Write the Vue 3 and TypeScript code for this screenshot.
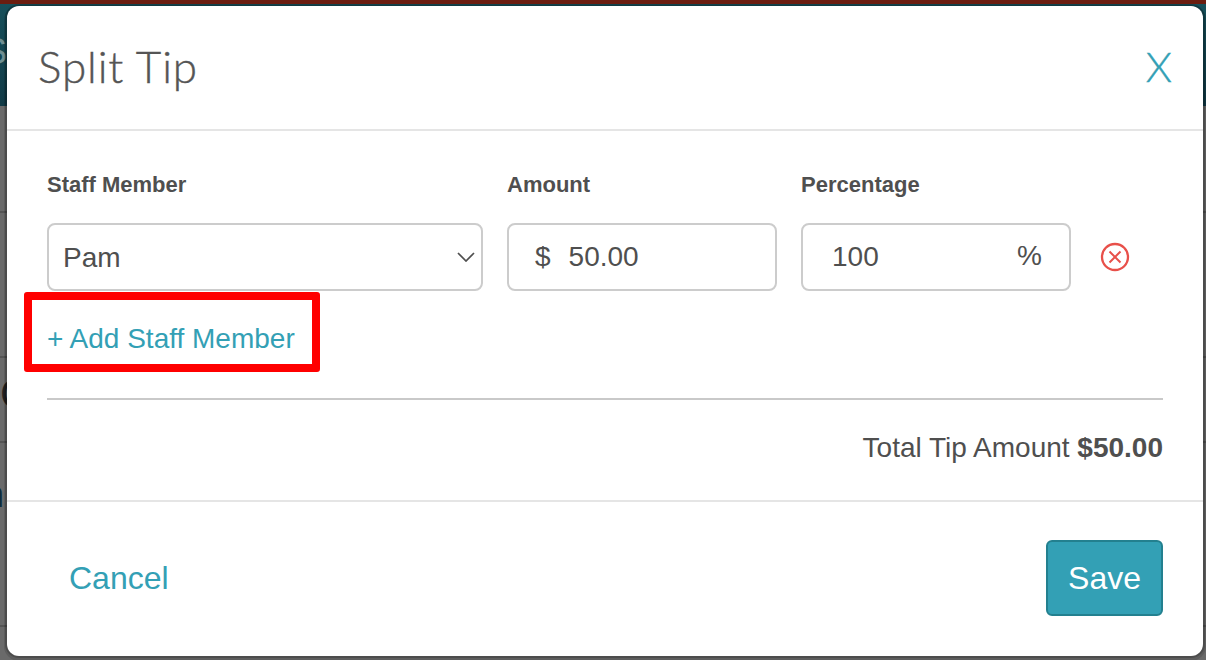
<script setup lang="ts">
import { ref } from 'vue'

const staff = ref('Pam')
const amount = ref('50.00')
const percentage = ref('100')

// table rows of the page behind the dialog, only their edges show
const rows = [
  { height: 107, text: '' },
  { height: 145, text: '' },
  { height: 85, text: 'C', cls: 'row-c' },
  { height: 184, text: 'n', cls: 'row-n' },
]
</script>

<template>
  <div class="page">
    <div class="backdrop">
      <div class="top-strip"></div>
      <div class="hero"><span class="hero-letter">S</span></div>
      <div class="content">
        <div
          v-for="(row, idx) in rows"
          :key="idx"
          class="bg-row"
          :style="{ height: row.height + 'px' }"
        >
          <span v-if="row.text" :class="row.cls">{{ row.text }}</span>
        </div>
      </div>
    </div>

    <div class="modal">
      <header class="modal-header">
        <h1 class="modal-title">Split Tip</h1>
        <span class="modal-close">X</span>
      </header>

      <section class="modal-body">
        <div class="split-row">
          <div class="field field-staff">
            <label class="field-label">Staff Member</label>
            <div class="control">
              <select v-model="staff" class="select">
                <option>Pam</option>
              </select>
              <svg class="chevron" width="18" height="10" viewBox="0 0 18 10">
                <path d="M1 1 L9 9 L17 1" fill="none" stroke="#4f4f4f" stroke-width="1.7" />
              </svg>
            </div>
          </div>
          <div class="field field-amount">
            <label class="field-label">Amount</label>
            <div class="control input-box">
              <span class="prefix">$</span>
              <input v-model="amount" class="input" />
            </div>
          </div>
          <div class="field field-percent">
            <label class="field-label">Percentage</label>
            <div class="control input-box percent-box">
              <input v-model="percentage" class="input" />
              <span class="suffix">%</span>
            </div>
          </div>
          <svg class="remove" width="30" height="30" viewBox="0 0 30 30">
            <circle cx="15" cy="15" r="13" fill="none" stroke="#e8504a" stroke-width="2.3" />
            <path d="M9.5 9.5 L20.5 20.5 M20.5 9.5 L9.5 20.5" stroke="#e8504a" stroke-width="2" />
          </svg>
        </div>

        <div class="add-row">
          <a class="add-link">+ Add Staff Member</a>
          <div class="highlight"></div>
        </div>

        <div class="total">Total Tip Amount <strong>$50.00</strong></div>
      </section>

      <footer class="modal-footer">
        <a class="cancel">Cancel</a>
        <button class="save">Save</button>
      </footer>
    </div>
  </div>
</template>

<style>
html,
body {
  margin: 0;
  background: #606060;
}
</style>

<style scoped>
.page {
  position: relative;
  width: 1206px;
  height: 660px;
  overflow: hidden;
  font-family: 'Liberation Sans', Arial, sans-serif;
  color: #4f4f4f;
}

.backdrop {
  display: flex;
  flex-direction: column;
  height: 100%;
}

.top-strip {
  height: 4px;
  background: #6b1d10;
}

.hero {
  height: 102px;
  background: linear-gradient(#17505b, #113a46);
  overflow: hidden;
}

.hero-letter {
  display: block;
  margin: 28px 0 0 -17px;
  font-size: 36px;
  line-height: 40px;
  color: #6f8f92;
}

.content {
  flex: 1;
  background: #6a6a6a;
}

.bg-row {
  box-sizing: border-box;
  border-bottom: 2px solid #555555;
  overflow: hidden;
}

.row-c {
  display: block;
  margin-top: 12px;
  font-size: 42px;
  line-height: 48px;
  color: #222;
}

.row-n {
  display: block;
  margin: 32px 0 0 -16px;
  font-size: 36px;
  line-height: 40px;
  color: #0e2a3a;
}

.modal {
  position: absolute;
  left: 7px;
  top: 6px;
  width: 1196px;
  height: 650px;
  display: flex;
  flex-direction: column;
  background: #fff;
  border-radius: 12px;
  box-shadow: 0 0 0 2px rgba(0, 0, 0, 0.18), 0 2px 0 3px rgba(0, 0, 0, 0.12);
}

.modal-header {
  height: 123px;
  padding: 0 31px;
  display: flex;
  align-items: center;
  justify-content: space-between;
  border-bottom: 2px solid #e5e5e5;
}

.modal-title {
  margin: 0 0 3px;
  font-family: Lato, sans-serif;
  font-size: 44px;
  font-weight: 300;
  letter-spacing: 0.9px;
  -webkit-text-stroke: 0.4px #555555;
  color: #555555;
}

.modal-close {
  margin-bottom: 3px;
  font-family: Lato, sans-serif;
  font-size: 42px;
  font-weight: 300;
  -webkit-text-stroke: 0.4px #33a0b5;
  color: #33a0b5;
}

.modal-body {
  height: 371px;
  box-sizing: border-box;
  padding: 42px 40px 0;
  border-bottom: 2px solid #e5e5e5;
}

.split-row {
  display: flex;
  align-items: flex-end;
  gap: 24px;
}

.field-label {
  display: block;
  margin-bottom: 26px;
  font-size: 22px;
  line-height: 24px;
  font-weight: 700;
}

.field-staff {
  width: 436px;
}

.field-amount,
.field-percent {
  width: 270px;
}

.control {
  position: relative;
  box-sizing: border-box;
  height: 68px;
}

.select {
  width: 100%;
  height: 100%;
  box-sizing: border-box;
  padding: 1px 14px 0;
  appearance: none;
  background: #fff;
  border: 2px solid #cccccc;
  border-radius: 8px;
  font-family: inherit;
  font-size: 28px;
  color: #4f4f4f;
}

.chevron {
  position: absolute;
  right: 8px;
  top: 29px;
}

.input-box {
  display: flex;
  align-items: center;
  padding: 0 26px;
  border: 2px solid #cccccc;
  border-radius: 8px;
  font-size: 28px;
}

.prefix {
  margin-right: 18px;
}

.input {
  width: 100%;
  min-width: 0;
  padding: 0;
  border: 0;
  outline: 0;
  background: transparent;
  font-family: inherit;
  font-size: 28px;
  color: #4f4f4f;
}

.percent-box {
  padding: 0 27px 0 29px;
}

.suffix {
  flex: none;
  margin-bottom: 2px;
}

.remove {
  margin: 0 0 19px 5px;
}

.add-row {
  position: relative;
  height: 109px;
  box-sizing: border-box;
  padding-top: 32px;
  border-bottom: 2px solid #c9c9c9;
}

.add-link {
  font-size: 28px;
  line-height: 32px;
  color: #33a0b5;
}

.highlight {
  position: absolute;
  left: -23px;
  top: 1px;
  width: 296px;
  height: 80px;
  box-sizing: border-box;
  border: 8px solid #ff0000;
  border-radius: 3px;
}

.total {
  margin-top: 32px;
  text-align: right;
  font-size: 28px;
  line-height: 32px;
}

.modal-footer {
  flex: 1;
  padding: 0 40px 2px 62px;
  display: flex;
  align-items: center;
  justify-content: space-between;
}

.cancel {
  font-size: 32px;
  color: #33a0b5;
}

.save {
  width: 117px;
  height: 76px;
  background: #33a0b5;
  border: 2px solid #23808f;
  border-radius: 6px;
  font-family: inherit;
  font-size: 32px;
  color: #fff;
}
</style>
